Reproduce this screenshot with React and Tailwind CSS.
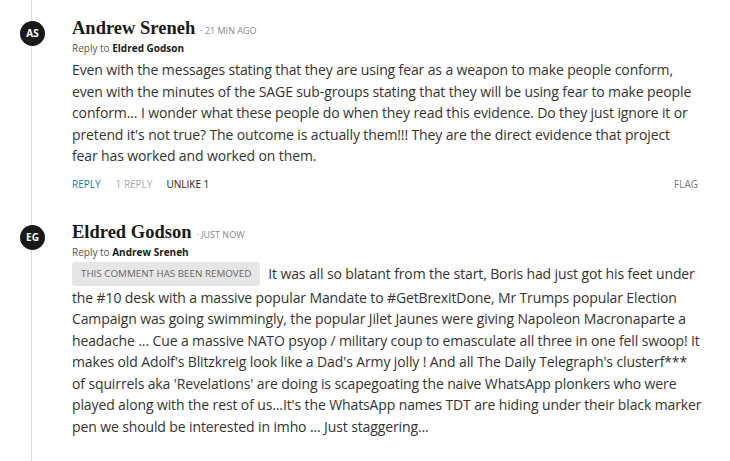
import React from "react";

const body = "font-['Open_Sans',sans-serif]";

function Avatar({ initials }) {
  return (
    <div className="relative z-10 flex h-[25px] w-[25px] shrink-0 items-center justify-center rounded-full bg-[#1a1a1a] text-[10px] font-bold text-white font-['Open_Sans',sans-serif]">
      {initials}
    </div>
  );
}

function Header({ name, time, replyTo }) {
  return (
    <div>
      <div className="flex items-baseline gap-[5px]">
        <span className="font-['Liberation_Serif',serif] text-[18.5px] font-bold leading-[22px] text-[#1a1a1a]">
          {name}
        </span>
        <span className={`${body} text-[9px] uppercase text-[#888]`}>· {time}</span>
      </div>
      <div className={`${body} mt-[2px] text-[10px] leading-[14px] text-[#555]`}>
        Reply to <span className="font-bold text-[#1a1a1a]">{replyTo}</span>
      </div>
    </div>
  );
}

const lines1 = [
  "Even with the messages stating that they are using fear as a weapon to make people conform,",
  "even with the minutes of the SAGE sub-groups stating that they will be using fear to make people",
  "conform... I wonder what these people do when they read this evidence. Do they just ignore it or",
  "pretend it's not true? The outcome is actually them!!! They are the direct evidence that project",
  "fear has worked and worked on them.",
];

const lines2 = [
  "the #10 desk with a massive popular Mandate to #GetBrexitDone, Mr Trumps popular Election",
  "Campaign was going swimmingly, the popular Jilet Jaunes were giving Napoleon Macronaparte a",
  "headache ... Cue a massive NATO psyop / military coup to emasculate all three in one fell swoop! It",
  "makes old Adolf's Blitzkreig look like a Dad's Army jolly ! And all The Daily Telegraph's clusterf***",
  "of squirrels aka 'Revelations' are doing is scapegoating the naive WhatsApp plonkers who were",
  "played along with the rest of us...It's the WhatsApp names TDT are hiding under their black marker",
  "pen we should be interested in imho ... Just staggering...",
];

export default function App() {
  return (
    <div className="relative h-[461px] w-[730px] overflow-hidden bg-white">
      <div className="absolute left-[31px] top-0 h-full w-px bg-[#dcdcdc]" />
      <div className="flex flex-col pl-[20px] pr-[32px] pt-[17px]">
        {/* comment 1 */}
        <div className="flex gap-[27px]">
          <div className="pt-[4px]">
            <Avatar initials="AS" />
          </div>
          <div className="flex-1">
            <Header name="Andrew Sreneh" time="21 min ago" replyTo="Eldred Godson" />
            <p className={`${body} mt-[4px] whitespace-nowrap text-[14px] tracking-[-0.12px] leading-[21.5px] text-[#333]`}>
              {lines1.map((l, i) => (
                <span key={i} className="block">{l}</span>
              ))}
            </p>
            <div className={`${body} mt-[10px] flex items-center text-[10px] uppercase leading-[14px]`}>
              <span className="text-[#1b7f86]">Reply</span>
              <span className="ml-[15px] text-[#aaa]">1 Reply</span>
              <span className="ml-[14px] text-[#222]">Unlike 1</span>
              <span className="ml-auto text-[#777]">Flag</span>
            </div>
          </div>
        </div>

        {/* comment 2 */}
        <div className="mt-[30px] flex gap-[27px]">
          <div className="pt-[4px]">
            <Avatar initials="EG" />
          </div>
          <div className="flex-1">
            <Header name="Eldred Godson" time="just now" replyTo="Andrew Sreneh" />
            <div className={`${body} mt-[3px] whitespace-nowrap text-[14px] tracking-[-0.12px] leading-[21.5px] text-[#333]`}>
              <div className="flex items-center">
                <span className="mr-[8px] inline-block rounded-[3px] bg-[#e6e6e6] px-[9px] py-[5px] text-[9.8px] tracking-normal uppercase leading-[14px] text-[#666]">
                  This comment has been removed
                </span>
                <span>It was all so blatant from the start, Boris had just got his feet under</span>
              </div>
              <div className="mt-[1px]">
                {lines2.map((l, i) => (
                  <span key={i} className="block">{l}</span>
                ))}
              </div>
            </div>
          </div>
        </div>
      </div>
    </div>
  );
}
